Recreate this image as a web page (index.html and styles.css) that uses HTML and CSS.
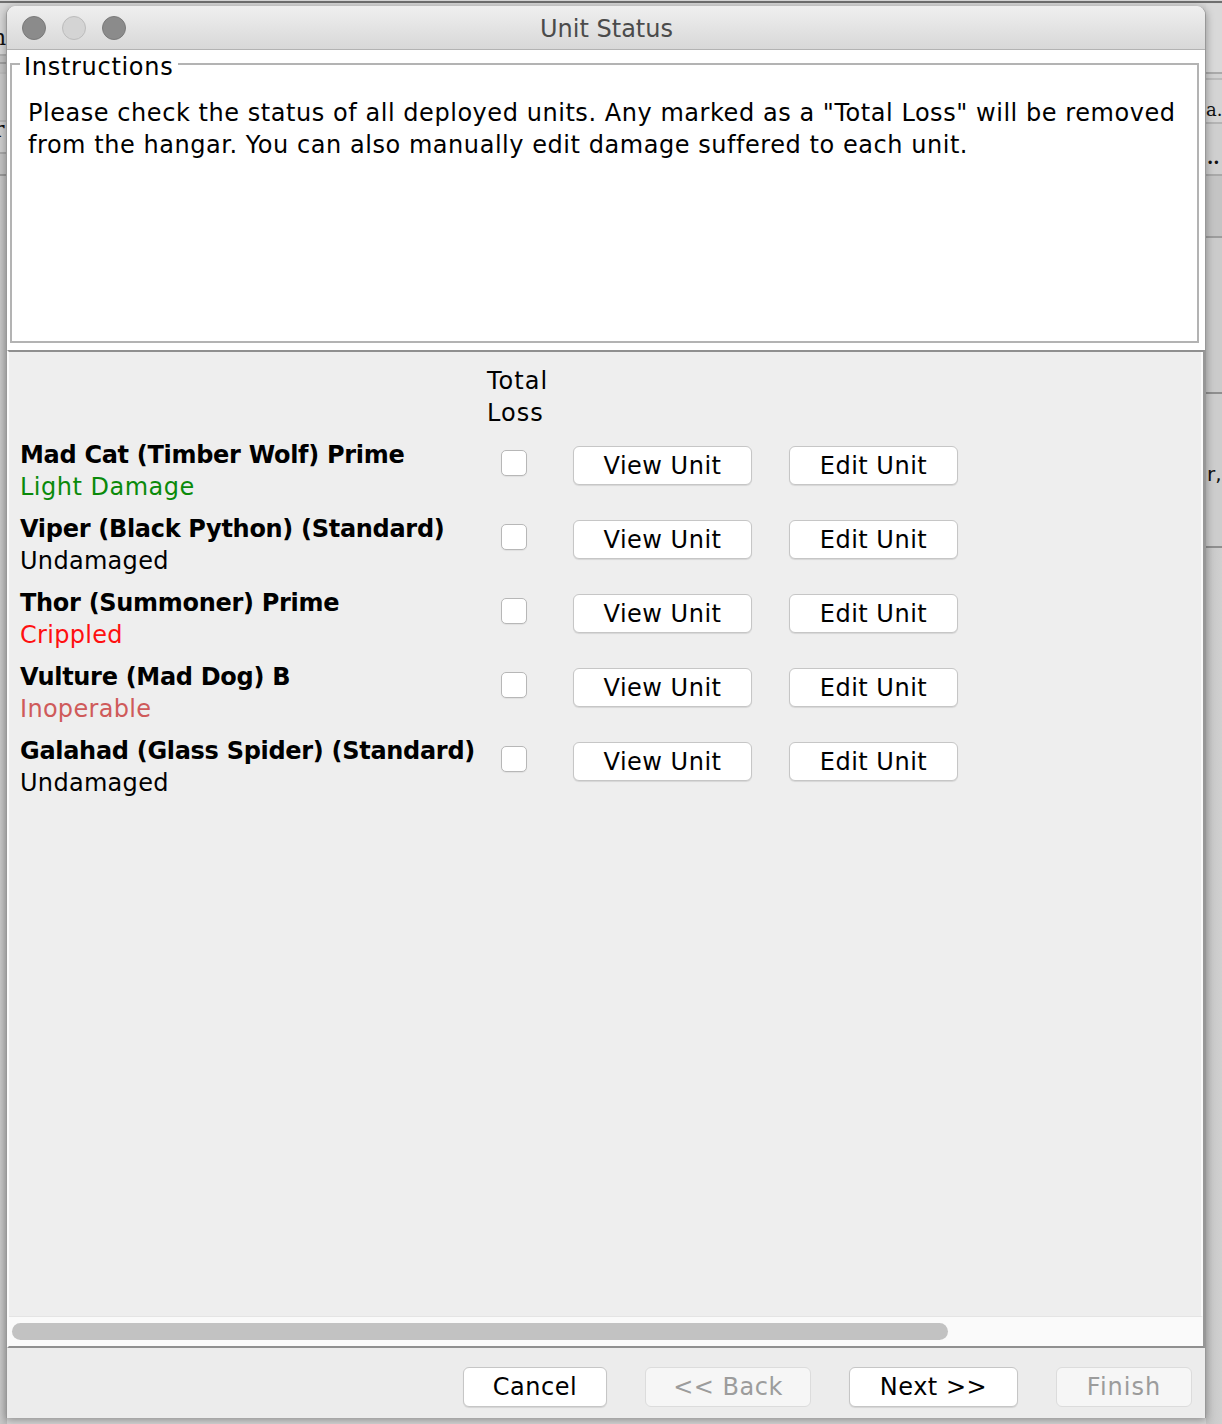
FILE: index.html
```html
<!DOCTYPE html>
<html>
<head>
<meta charset="utf-8">
<title>Unit Status</title>
<link rel="stylesheet" href="styles.css">
</head>
<body>
<div class="desktop">
  <div class="backdrop backdrop-left">
    <div class="bg-row r1"><span class="frag frag-n">n</span></div>
    <div class="bg-row r2"></div>
    <div class="bg-row r3"></div>
    <div class="bg-row r4"></div>
    <div class="bg-row r5"><span class="frag frag-r">r</span></div>
    <div class="bg-row r6"></div>
    <div class="bg-row r7"></div>
  </div>
  <div class="backdrop backdrop-right">
    <div class="bg-row q1"></div>
    <div class="bg-row q2"></div>
    <div class="bg-row q3"><span class="frag frag-a">a.</span></div>
    <div class="bg-row q4"><span class="frag frag-dots">..</span></div>
    <div class="bg-row q5"></div>
    <div class="bg-row q6"></div>
    <div class="bg-row q7"><span class="frag frag-rc">r,</span></div>
    <div class="bg-row q8"></div>
  </div>

  <div class="window">
    <div class="titlebar">
      <div class="lights">
        <span class="light"></span>
        <span class="light light-off"></span>
        <span class="light"></span>
      </div>
      <div class="title">Unit Status</div>
    </div>

    <div class="instructions-area">
      <fieldset class="instructions">
        <legend>Instructions</legend>
        <p>Please check the status of all deployed units. Any marked as a "Total Loss" will be removed from the hangar. You can also manually edit damage suffered to each unit.</p>
      </fieldset>
    </div>

    <div class="scrollpane">
      <div class="viewport">
        <div class="unit-grid">
          <div class="hdr-blank"></div>
          <div class="hdr">Total<br>Loss</div>
          <div class="hdr-blank"></div>
          <div class="hdr-blank"></div>

          <div class="unit-label"><div class="unit-name">Mad Cat (Timber Wolf) Prime</div><div class="status status-light">Light Damage</div></div>
          <div class="check-cell"><span class="checkbox"></span></div>
          <div class="btn-cell"><button class="btn btn-view">View Unit</button></div>
          <div class="btn-cell"><button class="btn btn-edit">Edit Unit</button></div>

          <div class="unit-label"><div class="unit-name">Viper (Black Python) (Standard)</div><div class="status">Undamaged</div></div>
          <div class="check-cell"><span class="checkbox"></span></div>
          <div class="btn-cell"><button class="btn btn-view">View Unit</button></div>
          <div class="btn-cell"><button class="btn btn-edit">Edit Unit</button></div>

          <div class="unit-label"><div class="unit-name">Thor (Summoner) Prime</div><div class="status status-crippled">Crippled</div></div>
          <div class="check-cell"><span class="checkbox"></span></div>
          <div class="btn-cell"><button class="btn btn-view">View Unit</button></div>
          <div class="btn-cell"><button class="btn btn-edit">Edit Unit</button></div>

          <div class="unit-label"><div class="unit-name">Vulture (Mad Dog) B</div><div class="status status-inop">Inoperable</div></div>
          <div class="check-cell"><span class="checkbox"></span></div>
          <div class="btn-cell"><button class="btn btn-view">View Unit</button></div>
          <div class="btn-cell"><button class="btn btn-edit">Edit Unit</button></div>

          <div class="unit-label"><div class="unit-name">Galahad (Glass Spider) (Standard)</div><div class="status">Undamaged</div></div>
          <div class="check-cell"><span class="checkbox"></span></div>
          <div class="btn-cell"><button class="btn btn-view">View Unit</button></div>
          <div class="btn-cell"><button class="btn btn-edit">Edit Unit</button></div>
        </div>
      </div>
      <div class="hscroll"><div class="thumb"></div></div>
    </div>

    <div class="buttonbar">
      <button class="btn btn-cancel">Cancel</button>
      <button class="btn btn-back" disabled>&lt;&lt; Back</button>
      <button class="btn btn-next">Next &gt;&gt;</button>
      <button class="btn btn-finish" disabled>Finish</button>
    </div>
  </div>
</div>
</body>
</html>
```

FILE: styles.css
```css
* { box-sizing: border-box; }

html, body {
  margin: 0;
  padding: 0;
}

body {
  width: 1222px;
  height: 1424px;
  overflow: hidden;
  background: #c9c9c9;
  font-family: "DejaVu Sans", "Noto Sans", sans-serif;
  font-size: 24px;
  letter-spacing: 0.5px;
  color: #000;
}

.desktop {
  position: relative;
  width: 1222px;
  height: 1424px;
  background: #d6d6d6;
}

.desktop::before {
  content: "";
  position: absolute;
  left: 0;
  right: 0;
  top: 1px;
  height: 2px;
  background: #6f6f6f;
}

/* background application visible at window edges */
.backdrop {
  position: absolute;
  top: 4px;
  bottom: 0;
  display: flex;
  flex-direction: column;
  overflow: hidden;
  font-family: "DejaVu Serif", serif;
  font-size: 22px;
  letter-spacing: 0;
}

.backdrop-left {
  left: 0;
  width: 7px;
  background: #c3c3c3;
}

.backdrop-right {
  right: 0;
  width: 16px;
  background: #d2d2d2;
}

.bg-row {
  position: relative;
  border-bottom: 2px solid #9a9a9a;
  flex: none;
}

.frag {
  position: absolute;
  color: #111;
  line-height: 24px;
}

.r1 { height: 52px; background: #d7d7d7; border-bottom-color: #b0b0b0; }
.r2 { height: 8px; border-bottom-color: #a0a0a0; }
.r3 { height: 10px; border-bottom-color: #bdbdbd; }
.r4 { height: 48px; background: #c9c9c9; border-bottom-color: #b8b8b8; }
.r5 { height: 32px; background: #cfcfcf; border-bottom-color: #a8a8a8; }
.r6 { height: 22px; border-bottom-color: #999; }
.r7 { flex: 1; border-bottom: none; background: linear-gradient(90deg, #c8c8c8, #bdbdbd); }

.frag-n { left: -8px; top: 22px; }
.frag-r { left: -6px; top: -4px; }

.q1 { height: 70px; background: #d9d9d9; border-bottom-color: #aaa; }
.q2 { height: 6px; border-bottom-color: #bbb; }
.q3 { height: 44px; background: #d4d4d4; border-bottom-color: #b4b4b4; }
.q4 { height: 52px; background: #cfcfcf; border-bottom-color: #a9a9a9; }
.q5 { height: 62px; background: #c4c4c4; border-bottom-color: #9d9d9d; }
.q6 { height: 156px; background: #cbcbcb; border-bottom-color: #8f8f8f; }
.q7 { height: 154px; background: #cdcdcd; border-bottom-color: #8f8f8f; }
.q8 { flex: 1; border-bottom: none; background: linear-gradient(90deg, #c6c6c6, #d0d0d0); }

.frag-a { left: 0; top: 18px; font-size: 18px; }
.frag-dots { left: 1px; top: 22px; font-size: 18px; font-weight: bold; }
.frag-rc { left: 1px; top: 68px; font-size: 20px; font-family: "DejaVu Sans", sans-serif; }

/* the dialog window */
.window {
  position: absolute;
  left: 6px;
  top: 6px;
  width: 1200px;
  height: 1412px;
  display: flex;
  flex-direction: column;
  background: #ececec;
  border-left: 1px solid #989898;
  border-right: 1px solid #989898;
  border-radius: 9px 9px 0 0;
  box-shadow: 0 2px 8px rgba(0, 0, 0, 0.35);
  overflow: hidden;
}

.titlebar {
  position: relative;
  flex: none;
  height: 44px;
  background: linear-gradient(#efefef, #d8d8d8);
  border-bottom: 1px solid #b3b3b3;
  display: flex;
  align-items: center;
  justify-content: center;
}

.lights {
  position: absolute;
  left: 15px;
  top: 10px;
  display: flex;
  gap: 16px;
}

.light {
  width: 24px;
  height: 24px;
  border-radius: 50%;
  background: #8b8b8b;
  border: 1px solid #7a7a7a;
}

.light-off {
  background: #d4d4d4;
  border-color: #bcbcbc;
}

.title {
  color: #4b4b4b;
  font-size: 24px;
  line-height: 28px;
  letter-spacing: 0;
  padding-left: 1px;
  padding-top: 2px;
}

.instructions-area {
  flex: none;
  height: 300px;
  background: #fff;
  padding: 0 6px 7px 3px;
}

.instructions {
  margin: -3px 0 0;
  height: 296px;
  min-width: 0;
  padding: 0 8px 0 16px;
  border: 2px solid #b3b3b3;
}

.instructions legend {
  margin-left: -8px;
  padding: 6px 5px 0 4px;
  font-size: 24px;
  line-height: 28px;
  letter-spacing: 0.7px;
}

.instructions p {
  margin: 16px 0 0;
  line-height: 32px;
  letter-spacing: 0.55px;
}

.scrollpane {
  flex: none;
  height: 998px;
  display: flex;
  flex-direction: column;
  border-top: 2px solid #8f8f8f;
  border-bottom: 2px solid #8f8f8f;
  border-left: 2px solid #fbfbfb;
  border-right: 2px solid #979797;
}

.viewport {
  flex: 1;
  background: #eeeeee;
  border-right: 2px solid #fbfbfb;
  padding: 13px 0 0 11px;
}

.unit-grid {
  display: grid;
  grid-template-columns: 467px 86px 216px 169px;
  grid-auto-rows: 64px;
  row-gap: 10px;
  line-height: 32px;
}

.hdr {
  line-height: 32px;
  letter-spacing: 1px;
}

.unit-name {
  font-weight: bold;
  letter-spacing: -0.3px;
}

.status { letter-spacing: 0.3px; }
.status-light { color: #0a8a0a; letter-spacing: 0.5px; }
.status-crippled { color: #ff1010; }
.status-inop { color: #cf5a5a; }

.check-cell {
  padding: 11px 0 0 14px;
}

.checkbox {
  display: block;
  width: 26px;
  height: 26px;
  background: #fff;
  border: 1px solid #b7b7b7;
  border-radius: 5px;
  box-shadow: 0 1px 1px rgba(0, 0, 0, 0.06);
}

.btn-cell {
  padding-top: 7px;
}

.btn {
  font-family: "DejaVu Sans", "Noto Sans", sans-serif;
  font-size: 24px;
  letter-spacing: 0.5px;
  color: #000;
  background: #fff;
  border: 1px solid #c6c6c6;
  border-radius: 6px;
  box-shadow: 0 1px 1px rgba(0, 0, 0, 0.1);
  height: 40px;
  line-height: 36px;
  padding: 0;
  margin: 0;
}

.btn-view { width: 179px; height: 39px; }
.btn-edit { width: 169px; height: 39px; }

.btn:disabled {
  background: #f6f6f6;
  border-color: #dcdcdc;
  color: #9c9c9c;
  box-shadow: none;
}

.hscroll {
  flex: none;
  height: 30px;
  background: #fafafa;
  border-top: 1px solid #e4e4e4;
  border-right: 2px solid #fbfbfb;
  padding: 6px 0 0 3px;
}

.thumb {
  width: 936px;
  height: 17px;
  border-radius: 9px;
  background: #c2c2c2;
}

.buttonbar {
  flex: none;
  height: 70px;
  display: flex;
  justify-content: flex-end;
  align-items: flex-start;
  gap: 38px;
  padding: 19px 13px 0 0;
  background: #ececec;
}

.btn-cancel { width: 144px; }
.btn-back { width: 166px; }
.btn-next { width: 169px; }
.btn-finish { width: 136px; letter-spacing: 1px; }
```
